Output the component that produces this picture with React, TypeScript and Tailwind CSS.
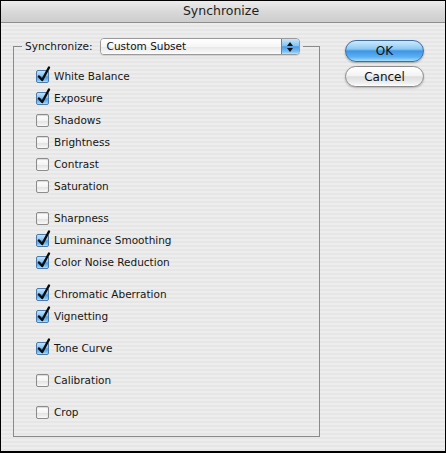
import React from "react"

type Item = { label: string; checked: boolean }

const groups: Item[][] = [
  [
    { label: "White Balance", checked: true },
    { label: "Exposure", checked: true },
    { label: "Shadows", checked: false },
    { label: "Brightness", checked: false },
    { label: "Contrast", checked: false },
    { label: "Saturation", checked: false },
  ],
  [
    { label: "Sharpness", checked: false },
    { label: "Luminance Smoothing", checked: true },
    { label: "Color Noise Reduction", checked: true },
  ],
  [
    { label: "Chromatic Aberration", checked: true },
    { label: "Vignetting", checked: true },
  ],
  [{ label: "Tone Curve", checked: true }],
  [{ label: "Calibration", checked: false }],
  [{ label: "Crop", checked: false }],
]

function Box({ checked }: { checked: boolean }) {
  if (!checked) {
    return (
      <span className="w-[13px] h-[13px] shrink-0 rounded-[2px] border border-[#8c8c8c] bg-[linear-gradient(to_bottom,#ffffff,#f4f4f4_50%,#e2e2e2_55%,#f8f8f8)] shadow-[inset_0_1px_1px_rgba(0,0,0,0.15)]" />
    )
  }
  return (
    <span className="relative w-[13px] h-[13px] shrink-0 rounded-[2px] border border-[#4a79ab] bg-[linear-gradient(to_bottom,#c4e3fa,#86c2f0_45%,#4f9de4_52%,#7dc0f5_85%,#b7e2ff)]">
      <svg
        className="absolute left-[-1px] top-[-5px] overflow-visible"
        width="16"
        height="18"
        viewBox="0 0 16 18"
        aria-hidden
      >
        <path
          d="M3 10.5 L6.2 14 L13 1.5"
          fill="none"
          stroke="#0b0b0b"
          strokeWidth="2.4"
          strokeLinecap="round"
          strokeLinejoin="round"
        />
      </svg>
    </span>
  )
}

function Row({ item }: { item: Item }) {
  return (
    <div className="h-[22px] flex items-center gap-[5px]">
      <Box checked={item.checked} />
      <span className="text-[10.5px] text-[#161616] leading-none">{item.label}</span>
    </div>
  )
}

export default function App() {
  return (
    <div
      className="w-[446px] h-[453px] bg-black pt-[1px] pl-[1px] pr-[1px] pb-[2px]"
      style={{ fontFamily: '"DejaVu Sans", Verdana, sans-serif' }}
    >
      <div className="w-full h-full flex flex-col">
        <div className="h-[22px] shrink-0 flex items-center justify-center border-b border-[#8e8e8e] bg-[linear-gradient(to_bottom,#ececec,#d9d9d9_50%,#cdcdcd)]">
          <span className="text-[12.5px] text-[#1e1e1e] pr-[4px]">Synchronize</span>
        </div>

        <div className="flex-1 flex bg-[repeating-linear-gradient(to_bottom,#ededed_0px,#ededed_2px,#e6e6e6_2px,#e6e6e6_4px)]">
          <fieldset className="ml-[12px] mt-[15px] w-[307px] h-[399px] border border-[#8a8a8a] p-0 m-0">
            <legend className="ml-[8px] px-[3px] flex items-center gap-[7px]">
              <span className="text-[10.5px] text-[#161616]">Synchronize:</span>
              <div className="w-[200px] h-[17px] flex rounded-[4px] border border-[#9a9a9a] overflow-hidden shadow-[0_1px_1px_rgba(0,0,0,0.12)]">
                <div className="flex-1 flex items-center pl-[6px] bg-[linear-gradient(to_bottom,#ffffff,#f6f6f6_50%,#e9e9e9_55%,#fbfbfb)]">
                  <span className="text-[10.5px] text-[#111] leading-none">Custom Subset</span>
                </div>
                <div className="w-[18px] flex flex-col items-center justify-center gap-[2px] border-l border-[#5a86b8] bg-[linear-gradient(to_bottom,#c7e5fb,#86c3f1_45%,#4b9ae3_52%,#7cc1f6_85%,#b9e3ff)]">
                  <svg width="6" height="4" viewBox="0 0 6 4" aria-hidden>
                    <path d="M0 4 L3 0 L6 4 Z" fill="#111" />
                  </svg>
                  <svg width="6" height="4" viewBox="0 0 6 4" aria-hidden>
                    <path d="M0 0 L3 4 L6 0 Z" fill="#111" />
                  </svg>
                </div>
              </div>
            </legend>

            <div className="pl-[22px] pt-[10px] flex flex-col gap-[10px]">
              {groups.map((g, i) => (
                <div key={i} className="flex flex-col">
                  {g.map((item) => (
                    <Row key={item.label} item={item} />
                  ))}
                </div>
              ))}
            </div>
          </fieldset>

          <div className="ml-[25px] mt-[17px] flex flex-col gap-[4px]">
            <button
              type="button"
              className="w-[79px] h-[22px] rounded-full border border-[#3c6fa6] bg-[linear-gradient(to_bottom,#cfe9fc,#8ccaf4_40%,#3f95e6_50%,#5cb0f2_80%,#a9deff)] shadow-[0_1px_2px_rgba(0,0,0,0.3)] text-[12px] text-[#111] leading-none"
            >
              OK
            </button>
            <button
              type="button"
              className="w-[79px] h-[21px] rounded-full border border-[#8a8a8a] bg-[linear-gradient(to_bottom,#ffffff,#f3f3f3_45%,#dedede_52%,#efefef_85%,#ffffff)] shadow-[0_1px_2px_rgba(0,0,0,0.25)] text-[12px] text-[#111] leading-none"
            >
              Cancel
            </button>
          </div>
        </div>
      </div>
    </div>
  )
}
